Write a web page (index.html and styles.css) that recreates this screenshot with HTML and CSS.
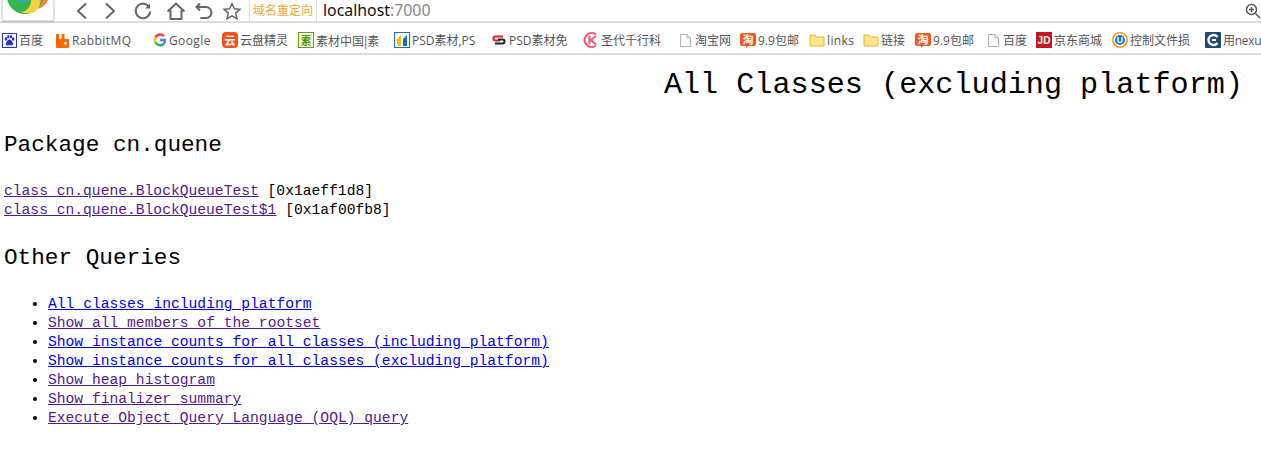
FILE: index.html
```html
<!DOCTYPE html>
<html lang="zh">
<head>
<meta charset="utf-8">
<title>All Classes (excluding platform)</title>
<link rel="stylesheet" href="styles.css">
</head>
<body>
<svg class="defs" aria-hidden="true">
  <symbol id="doc" viewBox="0 0 15 15"><path d="M2.500 1.500h6.500l3.500 3.500v8.500h-10z M9 1.500v3.500h3.500" fill="#fff" stroke="#b0b0b0"/></symbol>
  <symbol id="folder" viewBox="0 0 16 16"><path d="M1 14V3h5l1.500 2H15v9z" fill="#fde68f" stroke="#eeb526"/></symbol>
  <symbol id="tao" viewBox="0 0 16 16"><path d="M2 1h12a2 2 0 0 1 2 2v9a2 2 0 0 1-2 2H8l-2 2v-2H2a2 2 0 0 1-2-2V3a2 2 0 0 1 2-2z" fill="#f2591a"/><text x="8" y="12" text-anchor="middle" class="ico-txt" fill="#fff">淘</text></symbol>
</svg>
<header class="toolbar">
  <div class="logo-tab">
    <svg width="50" height="21" viewBox="0 0 50 21">
      <circle cx="32" cy="-4" r="14" fill="#f3873a"/>
      <circle cx="22" cy="-3" r="18" fill="#35b54a"/>
      <path d="M28 -3h9c2 8-2 15-8 17-4 1-8 0-11-1 8-1 11-8 10-16z" fill="#f8d23c"/>
      <circle cx="20" cy="-6" r="9" fill="#3d9be8"/>
    </svg>
  </div>
  <nav class="nav-icons">
    <svg class="nav-ico" width="20" height="20" viewBox="0 0 20 20"><path d="M14 2.500L6 10l8 7.500" /></svg>
    <svg class="nav-ico tight" width="20" height="20" viewBox="0 0 20 20"><path d="M6 2.500L14 10l-8 7.500" /></svg>
    <svg class="nav-ico" width="20" height="20" viewBox="0 0 20 20"><path d="M16.500 6.500A7.300 7.300 0 1 0 17.300 10.500" /><path d="M17 2.500v5h-5" class="fill"/></svg>
    <svg class="nav-ico" width="20" height="20" viewBox="0 0 20 20"><path d="M1.500 10.500L10 2.500l8.500 8M4.500 9v9h11V9" /></svg>
    <svg class="nav-ico tight" width="20" height="20" viewBox="0 0 20 20"><path d="M6 2.500L2.500 6 6 9.500M3 6h9a5 5 0 0 1 0 11H6.500" /></svg>
    <svg class="nav-ico thin tight" width="20" height="20" viewBox="0 0 20 20"><path d="M10 2.500l2.300 5.200 5.700.6-4.200 3.800 1.200 5.600-5-2.900-5 2.900 1.200-5.600L2 8.300l5.700-.6z" /></svg>
  </nav>
  <div class="redirect">域名重定向</div>
  <div class="address"><span class="host">localhost</span>:7000</div>
  <svg class="zoom-ico" width="16" height="16" viewBox="0 0 16 16"><circle cx="6.500" cy="6.500" r="5"/><path d="M10.500 10.500L15 15M4 6.500h5M6.500 4v5"/></svg>
</header>
<div class="bookmarks">
  <a class="bm"><svg width="15" height="15" viewBox="0 0 15 15"><rect x=".5" y=".5" width="14" height="14" fill="#fff" stroke="#2a32d8"/><g fill="#2a32d8"><ellipse cx="4" cy="6" rx="1.300" ry="1.800"/><ellipse cx="6.300" cy="3.800" rx="1.200" ry="1.700"/><ellipse cx="9" cy="3.800" rx="1.200" ry="1.700"/><ellipse cx="11.200" cy="6" rx="1.300" ry="1.800"/><path d="M7.500 6.500c2 0 4 3.500 3.500 5s-2.500.8-3.500.8-3 .8-3.500-.8 1.500-5 3.500-5z"/></g></svg>百度</a>
  <a class="bm latin"><svg width="15" height="15" viewBox="0 0 15 15"><path d="M1 1h3v5h2.500V1h3v5H14v8a1 1 0 0 1-1 1H2a1 1 0 0 1-1-1z" fill="#f60"/><rect x="9" y="9" width="2.500" height="2.500" fill="#fff"/></svg>RabbitMQ</a>
  <a class="bm latin"><svg width="14" height="14" viewBox="0 0 14 14" fill="none" stroke-width="2.400"><path d="M11 3.300A5 5 0 0 0 2.500 4.500" stroke="#ea4335"/><path d="M2.500 4.500a5.300 5.300 0 0 0 0 5" stroke="#fbbc05"/><path d="M2.500 9.500A5.200 5.200 0 0 0 10.500 11" stroke="#34a853"/><path d="M10.500 11c1-1 1.500-2.300 1.500-4H7" stroke="#4285f4"/></svg>Google</a>
  <a class="bm"><svg width="16" height="16" viewBox="0 0 16 16"><rect width="16" height="16" rx="4" fill="#f4511e"/><text x="8" y="13" text-anchor="middle" class="ico-txt" fill="#fff">云</text></svg>云盘精灵</a>
  <a class="bm cjk"><svg width="16" height="16" viewBox="0 0 16 16"><rect x=".5" y=".5" width="15" height="15" fill="#fff" stroke="#5fa800"/><text x="8" y="13" text-anchor="middle" class="ico-txt" fill="#4f9a00">素</text></svg>素材中国|素</a>
  <a class="bm"><svg width="16" height="16" viewBox="0 0 16 16"><rect x=".5" y=".5" width="15" height="15" fill="#fff" stroke="#1d70b8"/><path d="M2 8l5-5v11H4z" fill="#f6b91c"/><path d="M9 14V7l4-4v11z" fill="#1d70b8"/></svg>PSD素材,PS</a>
  <a class="bm"><svg width="16" height="16" viewBox="0 0 16 16" fill="none" stroke-width="2"><path d="M12 4.500H4.500a2 2 0 0 0 0 4H9" stroke="#e02020"/><path d="M4 11.500h7.500a2 2 0 0 0 0-4H7" stroke="#222"/></svg>PSD素材免</a>
  <a class="bm"><svg width="16" height="16" viewBox="0 0 16 16" fill="none"><path d="M13 2.500a7 7 0 1 0 0 11" stroke="#f3617f" stroke-width="2.200"/><path d="M6.500 4v8M13 4L8 8l5 4.500" stroke="#f3617f" stroke-width="2.200"/></svg>圣代千行科</a>
  <a class="bm"><svg width="15" height="15"><use href="#doc"/></svg>淘宝网</a>
  <a class="bm"><svg width="16" height="16"><use href="#tao"/></svg>9.9包邮</a>
  <a class="bm latin"><svg width="16" height="16"><use href="#folder"/></svg>links</a>
  <a class="bm"><svg width="16" height="16"><use href="#folder"/></svg>链接</a>
  <a class="bm"><svg width="16" height="16"><use href="#tao"/></svg>9.9包邮</a>
  <a class="bm"><svg width="15" height="15"><use href="#doc"/></svg>百度</a>
  <a class="bm"><svg width="16" height="16" viewBox="0 0 16 16"><rect width="16" height="16" fill="#c8161d"/><text x="8" y="12" text-anchor="middle" class="ico-jd" fill="#fff">JD</text></svg>京东商城</a>
  <a class="bm"><svg width="16" height="16" viewBox="0 0 16 16"><circle cx="8" cy="8" r="7.200" fill="#fff" stroke="#f39a1e" stroke-width="1.600"/><circle cx="8" cy="8" r="5" fill="#1b75bb"/><path d="M6 5v3.500a2 2 0 0 0 4 0V5" fill="none" stroke="#fff" stroke-width="1.400"/></svg>控制文件损</a>
  <a class="bm last"><svg width="16" height="16" viewBox="0 0 16 16"><rect width="16" height="16" rx="1" fill="#1c4a73"/><path d="M12.500 5A5 5 0 1 0 12.500 11" fill="none" stroke="#fff" stroke-width="2.400"/><rect x="7" y="7" width="4" height="2" fill="#fff"/></svg>用nexu</a>
</div>
<main class="content">
  <h1 class="title">All Classes (excluding platform)</h1>
  <h2 class="pkg">Package cn.quene</h2>
  <div class="classes">
    <div><a class="visited" href="#a">class cn.quene.BlockQueueTest</a> [0x1aeff1d8]</div>
    <div><a class="visited" href="#b">class cn.quene.BlockQueueTest$1</a> [0x1af00fb8]</div>
  </div>
  <h2 class="other">Other Queries</h2>
  <ul class="queries">
    <li><a class="fresh" href="#c">All classes including platform</a></li>
    <li><a class="visited" href="#d">Show all members of the rootset</a></li>
    <li><a class="fresh" href="#e">Show instance counts for all classes (including platform)</a></li>
    <li><a class="fresh" href="#f">Show instance counts for all classes (excluding platform)</a></li>
    <li><a class="visited" href="#g">Show heap histogram</a></li>
    <li><a class="visited" href="#h">Show finalizer summary</a></li>
    <li><a class="visited" href="#i">Execute Object Query Language (OQL) query</a></li>
  </ul>
</main>
</body>
</html>
```
FILE: styles.css
```css
* { box-sizing: border-box; }
html, body { margin: 0; padding: 0; height: 100%; overflow: hidden; background: #fff; }
body { font-family: "Liberation Mono", monospace; color: #000; }
.defs { display: none; }
.ico-txt { font: 700 11px "Noto Sans CJK SC", sans-serif; }
.ico-jd { font: 700 10px "Liberation Sans", sans-serif; }

.toolbar {
  height: 23px;
  display: flex;
  align-items: center;
  border-bottom: 2px solid #dcdcdc;
  background: #fff;
}
.logo-tab {
  width: 52px;
  height: 22px;
  margin-left: 2px;
  margin-top: -1px;
  border: 1px solid #ddd;
  border-top: 0;
  box-shadow: 0 1px 2px #bbb;
  display: flex;
  justify-content: center;
  overflow: hidden;
  flex: none;
}
.nav-icons { display: flex; gap: 13px; margin-left: 18px; width: 177px; flex: none; }
.nav-ico { fill: none; stroke: #666; stroke-width: 2; flex: none; }
.nav-ico.tight { margin-left: -5px; }
.nav-ico .fill { fill: #666; stroke: none; }
.nav-ico.thin { stroke-width: 1.500; }
.redirect {
  height: 21px;
  width: 68px;
  border: 1px solid #dcdcdc;
  border-width: 0 1px 0 1px;
  color: #f0a63c;
  font: 12px/20px "Noto Sans CJK SC", sans-serif;
  text-align: center;
  flex: none;
}
.address {
  margin-left: 6px;
  padding-bottom: 2px;
  font: 15.85px "Noto Sans", "Liberation Sans", sans-serif;
  color: #888;
  flex: 1;
}
.host { color: #111; }
.zoom-ico { fill: none; stroke: #555; stroke-width: 1.500; flex: none; }

.bookmarks {
  height: 32px;
  display: flex;
  align-items: center;
  padding: 4px 0 0 2px;
  border-bottom: 2px solid #dcdcdc;
  overflow: hidden;
  font: 12px "Open Sans", "Noto Sans CJK SC", sans-serif;
  color: #555;
}
.bm { display: flex; align-items: center; gap: 2px; white-space: nowrap; flex: none; overflow: hidden; }
.bm svg { flex: none; }
.bm.latin { letter-spacing: .4px; }
.bm.cjk { font-family: "Noto Sans CJK SC", sans-serif; }
.bm:nth-child(1) { width: 53px; }
.bm:nth-child(2) { width: 98px; }
.bm:nth-child(3) { width: 69px; }
.bm:nth-child(4) { width: 76px; }
.bm:nth-child(5) { width: 96px; }
.bm:nth-child(6) { width: 97px; }
.bm:nth-child(7) { width: 92px; }
.bm:nth-child(8) { width: 95px; }
.bm:nth-child(9) { width: 62px; }
.bm:nth-child(10) { width: 69px; }
.bm:nth-child(11) { width: 54px; }
.bm:nth-child(12) { width: 52px; }
.bm:nth-child(13) { width: 71px; }
.bm:nth-child(14) { width: 50px; }
.bm:nth-child(15) { width: 76px; }
.bm:nth-child(16) { width: 93px; }
.bm.last { width: 56px; letter-spacing: -.3px; }

.content { padding-left: 4px; font-size: 14.65px; line-height: 19px; }
.content a { text-decoration: underline; }
.visited { color: #551a8b; }
.fresh { color: #0000ee; }
.title {
  margin: 13px 18px 0 0;
  font-size: 30.16px;
  line-height: 34px;
  font-weight: 400;
  text-align: right;
}
.pkg, .other { font-size: 22.7px; line-height: 26px; font-weight: 400; margin: 0; }
.pkg { margin-top: 30px; }
.classes { margin-top: 24px; }
.other { margin-top: 25px; }
.queries { margin: 24px 0 0; padding-left: 44px; }
```
